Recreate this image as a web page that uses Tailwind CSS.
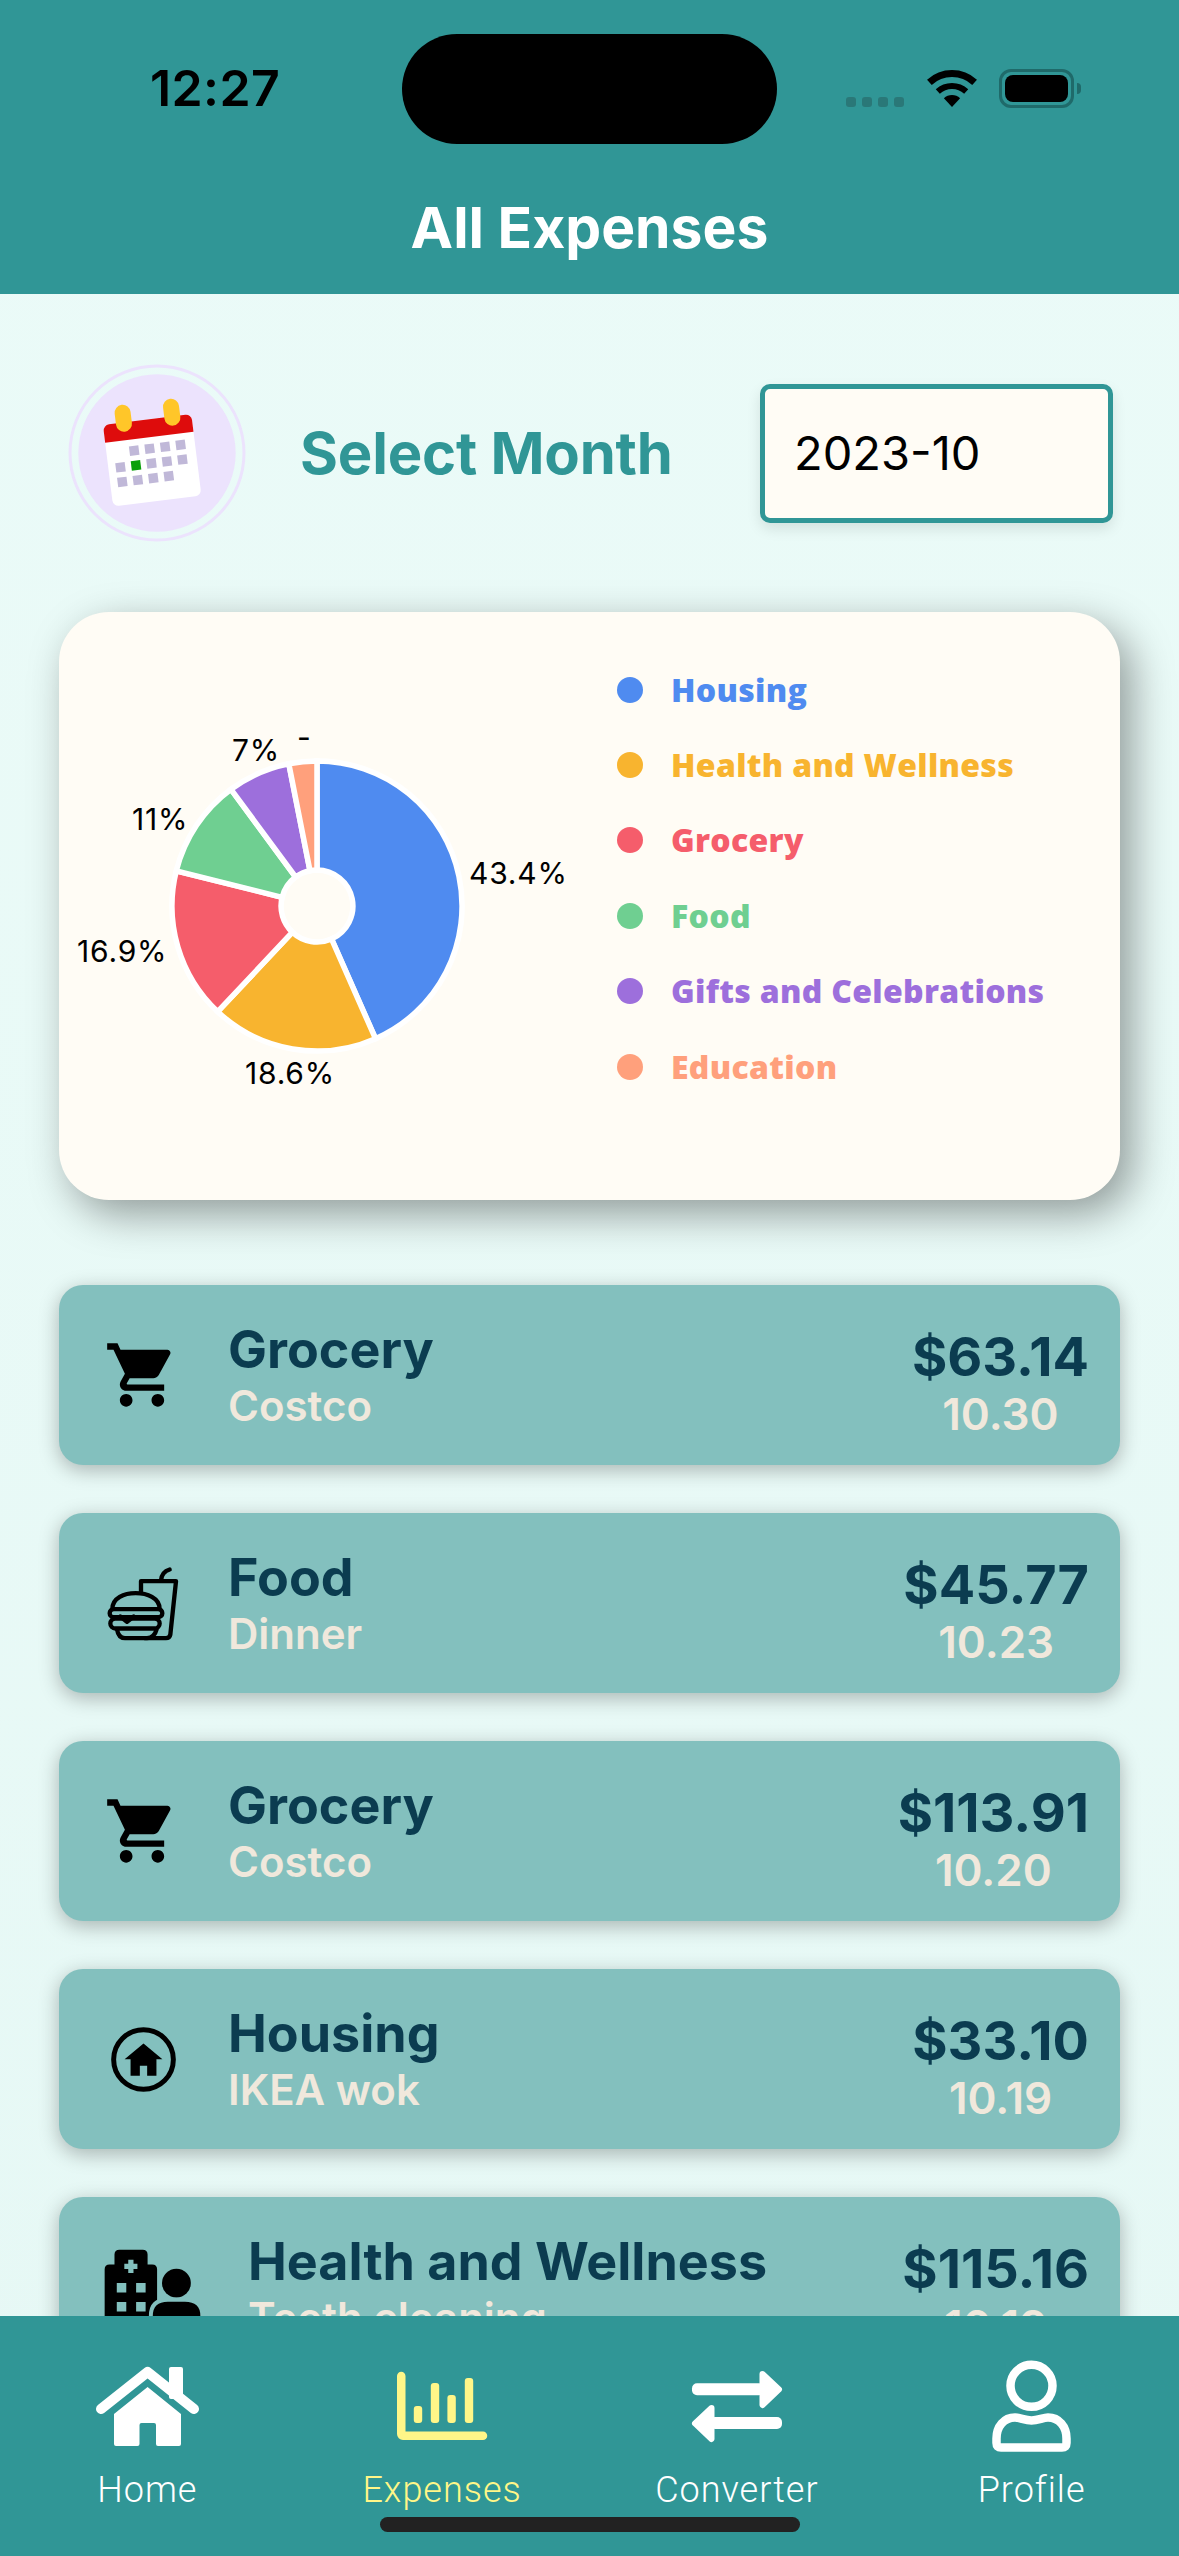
<!DOCTYPE html>
<html>
<head>
<meta charset="utf-8">
<script src="https://cdn.jsdelivr.net/npm/@tailwindcss/browser@4"></script>
<title>All Expenses</title>
</head>
<body class="bg-[#e9f9f6]">
<div class="relative w-[1179px] h-[2556px] overflow-hidden flex flex-col font-['Inter',sans-serif] bg-gradient-to-b from-[#ebfbf8] to-[#e6f8f5]">

  <!-- Header -->
  <header class="relative h-[294px] shrink-0 bg-[#309696] flex flex-col z-10">
    <div class="absolute left-[402px] top-[34px] w-[375px] h-[110px] rounded-[55px] bg-black"></div>
    <div class="flex items-center h-[56px] mt-[60px] pl-[150px] pr-[98px]">
      <span class="text-[50px] leading-[56px] font-semibold text-black tracking-[0.4px]">12:27</span>
      <div class="ml-auto flex items-end h-[39px]">
        <div class="flex gap-[6px] mb-[1px]">
          <span class="w-[10px] h-[10px] rounded-[3px] bg-[#2a7878]"></span>
          <span class="w-[10px] h-[10px] rounded-[3px] bg-[#2a7878]"></span>
          <span class="w-[10px] h-[10px] rounded-[3px] bg-[#2a7878]"></span>
          <span class="w-[10px] h-[10px] rounded-[3px] bg-[#2a7878]"></span>
        </div>
        <svg class="ml-[23px] mb-[1px]" width="50" height="37" viewBox="927 69 50 37">
          <path d="M929.4 81.3A33.5 33.5 0 0 1 974.6 81.3" fill="none" stroke="#000" stroke-width="7"/>
          <path d="M937.8 90.5A21 21 0 0 1 966.2 90.5" fill="none" stroke="#000" stroke-width="6"/>
          <path d="M952 106L943.9 97.2A12 12 0 0 1 960.1 97.2Z" fill="#000"/>
        </svg>
        <div class="ml-[22px] flex items-center">
          <div class="w-[75px] h-[39px] rounded-[12px] border-[3px] border-[#1f6a6a] p-[3px]">
            <div class="w-full h-full rounded-[8px] bg-black"></div>
          </div>
          <div class="ml-[3px] w-[4px] h-[11px] rounded-r-[4px] bg-[#1f6a6a]"></div>
        </div>
      </div>
    </div>
    <h1 class="mt-[80px] text-center text-[57px] leading-[64px] font-bold text-white">All Expenses</h1>
  </header>

  <!-- Scroll content -->
  <main class="flex-1 min-h-0 overflow-hidden">
    <!-- Select month -->
    <section class="flex items-center pt-[70px] pl-[68px] pr-[66px]">
      <svg class="shrink-0" width="178" height="178" viewBox="68 364 178 178">
        <circle cx="157" cy="453" r="87" fill="none" stroke="#ece3fd" stroke-width="3"/>
        <circle cx="157" cy="453" r="78.7" fill="#ece3fd"/>
        <g transform="rotate(-7.1 152.2 460.3)">
          <rect x="107.7" y="419.3" width="89" height="82" rx="6" fill="#fff"/>
          <path d="M107.7 437V425.3a6 6 0 0 1 6-6H190.7a6 6 0 0 1 6 6V437Z" fill="#de0c0c"/>
          <rect x="120.7" y="401.5" width="16" height="27" rx="8" fill="#ffc629"/>
          <rect x="169.5" y="401.5" width="16" height="27" rx="8" fill="#ffc629"/>
          <g fill="#c0b8d8">
            <rect x="130.75" y="443.75" width="9.5" height="9.5"/>
            <rect x="146.35" y="443.75" width="9.5" height="9.5"/>
            <rect x="161.95" y="443.75" width="9.5" height="9.5"/>
            <rect x="177.55" y="443.75" width="9.5" height="9.5"/>
            <rect x="115.15" y="458.55" width="9.5" height="9.5"/>
            <rect x="130.75" y="458.55" width="9.5" height="9.5" fill="#0aa00a"/>
            <rect x="146.35" y="458.55" width="9.5" height="9.5"/>
            <rect x="161.95" y="458.55" width="9.5" height="9.5"/>
            <rect x="177.55" y="458.55" width="9.5" height="9.5"/>
            <rect x="115.15" y="473.35" width="9.5" height="9.5"/>
            <rect x="130.75" y="473.35" width="9.5" height="9.5"/>
            <rect x="146.35" y="473.35" width="9.5" height="9.5"/>
            <rect x="161.95" y="473.35" width="9.5" height="9.5"/>
          </g>
        </g>
      </svg>
      <span class="ml-[54px] text-[58px] leading-[72px] font-bold tracking-[-0.2px] text-[#309696]">Select Month</span>
      <div class="ml-auto w-[353px] h-[139px] flex items-center pl-[29px] rounded-[10px] border-[5px] border-[#309696] bg-[#fffcf5] shadow-[0_6px_14px_rgba(0,0,0,0.1)]">
        <span class="text-[47px] leading-[60px] text-black">2023-10</span>
      </div>
    </section>

    <!-- Chart card -->
    <section class="mx-[59px] mt-[70px] h-[588px] flex rounded-[50px] bg-[#fffcf5] shadow-[12px_14px_42px_rgba(0,0,0,0.38)]">
      <svg class="shrink-0" width="558" height="588" viewBox="59 612 558 588">
        <g transform="translate(317 906)" stroke="#fff" stroke-width="5.5" stroke-linejoin="miter">
          <path d="M0 -36L0 -145A145 145 0 0 1 58.5 132.7L14.5 32.9A36 36 0 0 0 0 -36Z" fill="#4f8bf0"/>
          <path d="M14.5 32.9L58.5 132.7A145 145 0 0 1 -99.3 105.7L-24.6 26.2A36 36 0 0 0 14.5 32.9Z" fill="#f8b42f"/>
          <path d="M-24.6 26.2L-99.3 105.7A145 145 0 0 1 -140.7 -35.1L-34.9 -8.7A36 36 0 0 0 -24.6 26.2Z" fill="#f55d6b"/>
          <path d="M-34.9 -8.7L-140.7 -35.1A145 145 0 0 1 -86 -116.7L-21.4 -29A36 36 0 0 0 -34.9 -8.7Z" fill="#6fcf91"/>
          <path d="M-21.4 -29L-86 -116.7A145 145 0 0 1 -28.2 -142.2L-7 -35.3A36 36 0 0 0 -21.4 -29Z" fill="#9d6fdc"/>
          <path d="M-7 -35.3L-28.2 -142.2A145 145 0 0 1 0 -145L0 -36A36 36 0 0 0 -7 -35.3Z" fill="#ffa07c"/>
        </g>
        <g class="text-[30px] tracking-[0.8px]" fill="#000">
          <text x="469" y="884">43.4%</text>
          <text x="77" y="962">16.9%</text>
          <text x="245" y="1084">18.6%</text>
          <text x="132" y="830">11%</text>
          <text x="232" y="761">7%</text>
          <text x="297" y="748">-</text>
        </g>
      </svg>
      <ul class="pt-[40px] font-['Open_Sans',sans-serif] font-extrabold text-[32px] tracking-[0.3px]">
        <li class="h-[75.4px] flex items-center gap-[28px] text-[#4f8bf0]"><span class="w-[26px] h-[26px] rounded-full bg-[#4f8bf0]"></span>Housing</li>
        <li class="h-[75.4px] flex items-center gap-[28px] text-[#f8b42f]"><span class="w-[26px] h-[26px] rounded-full bg-[#f8b42f]"></span>Health and Wellness</li>
        <li class="h-[75.4px] flex items-center gap-[28px] text-[#f55d6b]"><span class="w-[26px] h-[26px] rounded-full bg-[#f55d6b]"></span>Grocery</li>
        <li class="h-[75.4px] flex items-center gap-[28px] text-[#6fcf91]"><span class="w-[26px] h-[26px] rounded-full bg-[#6fcf91]"></span>Food</li>
        <li class="h-[75.4px] flex items-center gap-[28px] text-[#9d6fdc]"><span class="w-[26px] h-[26px] rounded-full bg-[#9d6fdc]"></span>Gifts and Celebrations</li>
        <li class="h-[75.4px] flex items-center gap-[28px] text-[#ffa07c]"><span class="w-[26px] h-[26px] rounded-full bg-[#ffa07c]"></span>Education</li>
      </ul>
    </section>

    <!-- Expense list -->
    <section class="mx-[59px] mt-[85px] flex flex-col gap-[48px]">
      <!-- Grocery -->
      <article class="h-[180px] shrink-0 flex items-center rounded-[24px] bg-[#83c0be] shadow-[0_5px_20px_rgba(0,0,0,0.28)] pr-[31px]">
        <div class="w-[169px] shrink-0 pl-[45px]">
          <svg width="76" height="76" viewBox="0 0 24 24" fill="#000"><path d="M7 18c-1.1 0-1.99.9-1.99 2S5.9 22 7 22s2-.9 2-2-.9-2-2-2zM1 2v2h2l3.6 7.59-1.35 2.45c-.16.28-.25.61-.25.96 0 1.1.9 2 2 2h12v-2H7.42c-.14 0-.25-.11-.25-.25l.03-.12.9-1.63h7.45c.75 0 1.41-.41 1.75-1.03l3.58-6.49c.08-.14.12-.31.12-.48 0-.55-.45-1-1-1H5.21l-.94-2H1zm16 16c-1.1 0-1.99.9-1.99 2s.89 2 1.99 2 2-.9 2-2-.9-2-2-2z"/></svg>
        </div>
        <div class="flex flex-col gap-[2px]">
          <span class="text-[52px] leading-[60px] font-bold text-[#0b3c50]">Grocery</span>
          <span class="text-[42px] leading-[48px] font-semibold text-[#f0e8dc]">Costco</span>
        </div>
        <div class="ml-auto flex flex-col items-center gap-[3px] pt-[14px]">
          <span class="text-[54px] leading-[60px] font-bold text-[#0b3c50]">$63.14</span>
          <span class="text-[44px] leading-[48px] font-semibold text-[#f0e8dc]">10.30</span>
        </div>
      </article>
      <!-- Food -->
      <article class="h-[180px] shrink-0 flex items-center rounded-[24px] bg-[#83c0be] shadow-[0_5px_20px_rgba(0,0,0,0.28)] pr-[31px]">
        <div class="w-[169px] shrink-0 pl-[47px]">
          <svg width="75" height="77" viewBox="195 880 225 230" fill="none" stroke="#000" stroke-width="13" stroke-linecap="round" stroke-linejoin="round">
            <path d="M300 962V928H405L388 1088Q386 1099 375 1099H312"/>
            <path d="M360 926Q362 900 386 893"/>
            <path d="M214 1012C214 978 250 964 284 964C318 964 356 978 356 1012"/>
            <rect x="206" y="1012" width="158" height="24" rx="12"/>
            <rect x="208" y="1040" width="148" height="30" rx="15"/>
            <path d="M228 1072Q232 1099 252 1099H318Q340 1099 347 1072"/>
            <path d="M238 1034L258 1050L278 1034"/>
          </svg>
        </div>
        <div class="flex flex-col gap-[2px]">
          <span class="text-[52px] leading-[60px] font-bold text-[#0b3c50]">Food</span>
          <span class="text-[42px] leading-[48px] font-semibold text-[#f0e8dc]">Dinner</span>
        </div>
        <div class="ml-auto flex flex-col items-center gap-[3px] pt-[14px]">
          <span class="text-[54px] leading-[60px] font-bold text-[#0b3c50]">$45.77</span>
          <span class="text-[44px] leading-[48px] font-semibold text-[#f0e8dc]">10.23</span>
        </div>
      </article>
      <!-- Grocery -->
      <article class="h-[180px] shrink-0 flex items-center rounded-[24px] bg-[#83c0be] shadow-[0_5px_20px_rgba(0,0,0,0.28)] pr-[31px]">
        <div class="w-[169px] shrink-0 pl-[45px]">
          <svg width="76" height="76" viewBox="0 0 24 24" fill="#000"><path d="M7 18c-1.1 0-1.99.9-1.99 2S5.9 22 7 22s2-.9 2-2-.9-2-2-2zM1 2v2h2l3.6 7.59-1.35 2.45c-.16.28-.25.61-.25.96 0 1.1.9 2 2 2h12v-2H7.42c-.14 0-.25-.11-.25-.25l.03-.12.9-1.63h7.45c.75 0 1.41-.41 1.75-1.03l3.58-6.49c.08-.14.12-.31.12-.48 0-.55-.45-1-1-1H5.21l-.94-2H1zm16 16c-1.1 0-1.99.9-1.99 2s.89 2 1.99 2 2-.9 2-2-.9-2-2-2z"/></svg>
        </div>
        <div class="flex flex-col gap-[2px]">
          <span class="text-[52px] leading-[60px] font-bold text-[#0b3c50]">Grocery</span>
          <span class="text-[42px] leading-[48px] font-semibold text-[#f0e8dc]">Costco</span>
        </div>
        <div class="ml-auto flex flex-col items-center gap-[3px] pt-[14px]">
          <span class="text-[54px] leading-[60px] font-bold text-[#0b3c50]">$113.91</span>
          <span class="text-[44px] leading-[48px] font-semibold text-[#f0e8dc]">10.20</span>
        </div>
      </article>
      <!-- Housing -->
      <article class="h-[180px] shrink-0 flex items-center rounded-[24px] bg-[#83c0be] shadow-[0_5px_20px_rgba(0,0,0,0.28)] pr-[31px]">
        <div class="w-[169px] shrink-0 pl-[50px]">
          <svg width="69" height="69" viewBox="205 222 208 208">
            <circle cx="309" cy="326" r="90" fill="none" stroke="#000" stroke-width="15"/>
            <path d="M309 278L366 325H348V375H320V345H298V375H270V325H252Z" fill="#000"/>
          </svg>
        </div>
        <div class="flex flex-col gap-[2px]">
          <span class="text-[52px] leading-[60px] font-bold text-[#0b3c50]">Housing</span>
          <span class="text-[42px] leading-[48px] font-semibold text-[#f0e8dc]">IKEA wok</span>
        </div>
        <div class="ml-auto flex flex-col items-center gap-[3px] pt-[14px]">
          <span class="text-[54px] leading-[60px] font-bold text-[#0b3c50]">$33.10</span>
          <span class="text-[44px] leading-[48px] font-semibold text-[#f0e8dc]">10.19</span>
        </div>
      </article>
      <!-- Health -->
      <article class="h-[180px] shrink-0 flex items-center rounded-[24px] bg-[#83c0be] shadow-[0_5px_20px_rgba(0,0,0,0.28)] pr-[31px]">
        <div class="w-[189px] shrink-0 pl-[45px]">
          <svg width="97" height="79" viewBox="190 890 296 237">
            <path fill-rule="evenodd" d="M222 938V908Q222 893 237 893H308Q323 893 323 908V938H337Q352 938 352 953V1127H192V953Q192 938 207 938ZM264 924V936H252V952H264V964H280V952H292V936H280V924ZM229 995V1024H258V995ZM288 995V1024H317V995ZM229 1053V1082H258V1053ZM288 1053V1082H317V1053Z" fill="#000"/>
            <circle cx="411" cy="995" r="44" fill="#000"/>
            <path d="M333 1127V1095Q333 1046 385 1046H437Q490 1046 490 1095V1127Z" fill="#000" stroke="#83c0be" stroke-width="12"/>
          </svg>
        </div>
        <div class="flex flex-col gap-[2px]">
          <span class="text-[52px] leading-[60px] font-bold text-[#0b3c50]">Health and Wellness</span>
          <span class="text-[42px] leading-[48px] font-semibold text-[#f0e8dc]">Teeth cleaning</span>
        </div>
        <div class="ml-auto flex flex-col items-center gap-[3px] pt-[14px]">
          <span class="text-[54px] leading-[60px] font-bold text-[#0b3c50]">$115.16</span>
          <span class="text-[44px] leading-[48px] font-semibold text-[#f0e8dc]">10.19</span>
        </div>
      </article>
    </section>
  </main>

  <!-- Tab bar -->
  <nav class="relative h-[240px] shrink-0 bg-[#309696] grid grid-cols-4 pt-[40px] font-['Roboto',sans-serif] font-light text-[36px] leading-[44px] tracking-[1px] text-white z-10">
    <a class="flex flex-col items-center gap-[12px]">
      <span class="h-[100px] flex items-center">
        <svg width="103" height="81" viewBox="95 2366 103 81">
          <path d="M100 2409L146.6 2372L193 2409" fill="none" stroke="#fff" stroke-width="10" stroke-linejoin="round" stroke-linecap="round"/>
          <rect x="168" y="2367" width="14" height="32" rx="2" fill="#fff"/>
          <path d="M146.6 2387L180 2414V2444a2 2 0 0 1-2 2H157a2 2 0 0 1-2-2V2425a2 2 0 0 0-2-2H140.5a2 2 0 0 0-2 2V2444a2 2 0 0 1-2 2H115a2 2 0 0 1-2-2V2414Z" fill="#fff"/>
        </svg>
      </span>
      <span>Home</span>
    </a>
    <a class="flex flex-col items-center gap-[12px] text-[#fff688]">
      <span class="h-[100px] flex items-center">
        <svg width="92" height="70" viewBox="396 2371 92 70" fill="#fff688">
          <path d="M397 2376a4 4 0 0 1 8.5 0V2431.5H483a4 4 0 0 1 0 8.5H403a6 6 0 0 1-6-6Z"/>
          <rect x="413.8" y="2406" width="8.4" height="17" rx="3"/>
          <rect x="430.8" y="2383" width="8.4" height="40" rx="3"/>
          <rect x="447.4" y="2395" width="8.4" height="28" rx="3"/>
          <rect x="464.8" y="2378" width="8.4" height="45" rx="3"/>
        </svg>
      </span>
      <span>Expenses</span>
    </a>
    <a class="flex flex-col items-center gap-[12px]">
      <span class="h-[100px] flex items-center">
        <svg width="94" height="75" viewBox="690 2369 94 75" fill="#fff">
          <rect x="692" y="2383.3" width="72" height="12" rx="5"/>
          <path d="M762.5 2374L779 2389.4L762.5 2405Z" stroke="#fff" stroke-width="6" stroke-linejoin="round"/>
          <rect x="710" y="2417" width="72" height="12" rx="5"/>
          <path d="M711.5 2408L695 2423.4L711.5 2439Z" stroke="#fff" stroke-width="6" stroke-linejoin="round"/>
        </svg>
      </span>
      <span>Converter</span>
    </a>
    <a class="flex flex-col items-center gap-[12px]">
      <span class="h-[100px] flex items-center">
        <svg width="80" height="92" viewBox="991 2360.5 80 92" fill="none" stroke="#fff" stroke-width="8.5">
          <circle cx="1030.5" cy="2386.3" r="21"/>
          <path d="M1000 2448Q995.5 2448 995.5 2443.5V2439C995.5 2427 1003 2418 1014 2418C1019 2418 1024 2421 1030.5 2421C1037 2421 1042 2418 1047 2418C1058 2418 1065.5 2427 1065.5 2439V2443.5Q1065.5 2448 1061 2448Z" stroke-linejoin="round"/>
        </svg>
      </span>
      <span>Profile</span>
    </a>
    <div class="absolute left-[380px] top-[201px] w-[420px] h-[15px] rounded-full bg-[#222222]"></div>
  </nav>
</div>
</body>
</html>
